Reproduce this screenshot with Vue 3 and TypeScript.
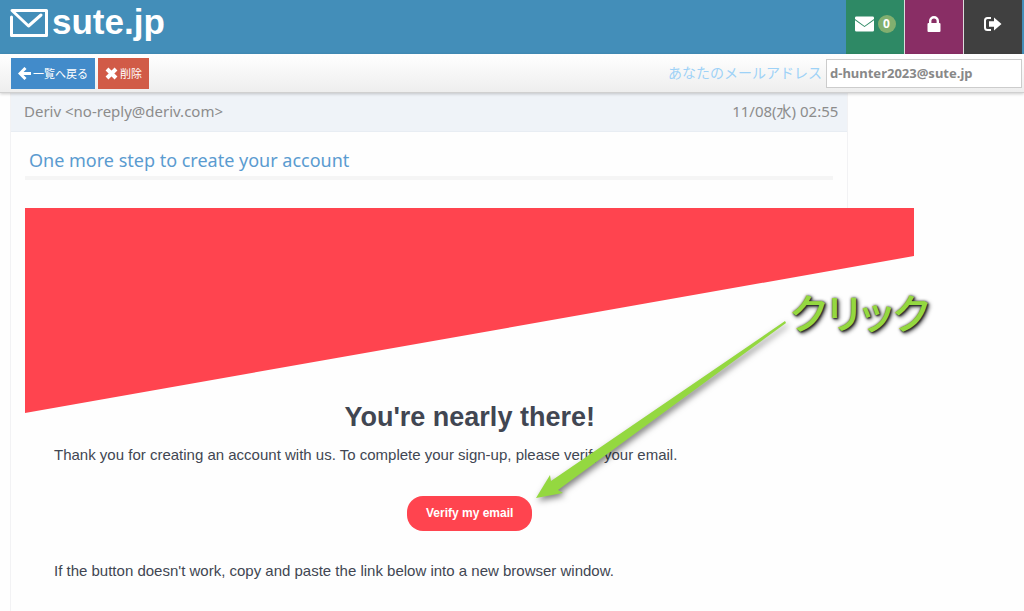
<script setup lang="ts">
import { ref } from 'vue'

const unread = ref(0)
const address = ref('d-hunter2023@sute.jp')
const mail = {
  from: 'Deriv <no-reply@deriv.com>',
  date: '11/08(水) 02:55',
  subject: 'One more step to create your account',
}
</script>

<template>
  <div class="page">
    <header class="navbar">
      <a class="brand" href="#">
        <svg class="brand-icon" viewBox="0 0 38 28" aria-hidden="true">
          <path d="M1.5 8V26.5H36.500V1.500H2L18.500 17L31 6" />
        </svg>
        <span>sute.jp</span>
      </a>
      <nav class="tiles">
        <a class="tile inbox" href="#" aria-label="受信箱">
          <svg class="envelope" viewBox="0 0 20 16" aria-hidden="true">
            <path d="M0 1.500Q0 0 1.500 0H18.500Q20 0 20 1.500V2.700L10 10L0 2.700ZM0 4L10 11.200L20 4V14.500Q20 16 18.500 16H1.500Q0 16 0 14.500Z" />
          </svg>
          <span class="badge">{{ unread }}</span>
        </a>
        <a class="tile lock" href="#" aria-label="ロック">
          <svg viewBox="0 0 14 16" class="padlock" aria-hidden="true">
            <path fill-rule="evenodd" d="M2 7V5A5 5 0 0 1 12 5V7H12.500Q13.500 7 13.500 8V15Q13.500 16 12.500 16H1.500Q0.500 16 0.500 15V8Q0.500 7 1.500 7ZM4.400 7H9.600V5A2.600 2.600 0 0 0 4.400 5Z" />
          </svg>
        </a>
        <a class="tile exit" href="#" aria-label="ログアウト">
          <svg viewBox="0 0 18 14" class="signout" aria-hidden="true">
            <path class="frame" d="M7 1H3.500Q1 1 1 3.500V10.500Q1 13 3.500 13H7" />
            <path d="M10 0.500L17.500 7L10 13.500V9.800H5V4.200H10Z" />
          </svg>
        </a>
      </nav>
    </header>

    <div class="toolbar">
      <div class="actions">
        <button type="button" class="btn back">
          <svg viewBox="0 0 13 13" aria-hidden="true">
            <path d="M7.500 1L2 6.500L7.500 12M2.500 6.500H13" />
          </svg>
          <span>一覧へ戻る</span>
        </button>
        <button type="button" class="btn remove">
          <svg viewBox="0 0 13 13" class="cross" aria-hidden="true">
            <path d="M2 2L11 11M11 2L2 11" />
          </svg>
          <span>削除</span>
        </button>
      </div>
      <div class="address">
        <label for="address">あなたのメールアドレス</label>
        <input id="address" v-model="address" type="text" readonly />
      </div>
    </div>

    <main class="card">
      <div class="card-head">
        <span>{{ mail.from }}</span>
        <span>{{ mail.date }}</span>
      </div>
      <div class="card-body">
        <h1 class="subject">{{ mail.subject }}</h1>
        <article class="email">
          <svg class="banner" viewBox="0 0 889 205" preserveAspectRatio="none" aria-hidden="true">
            <polygon points="0,0 889,0 889,48 0,205" />
          </svg>
          <h2>You're nearly there!</h2>
          <p>Thank you for creating an account with us. To complete your sign-up, please verify your email.</p>
          <a class="verify" href="#">Verify my email</a>
          <p>If the button doesn't work, copy and paste the link below into a new browser window.</p>
        </article>
      </div>
    </main>

    <svg class="arrow" viewBox="0 0 260 190" aria-hidden="true">
      <polygon points="6,178 20,155 21,161 255,1 256,3 28,170 33,173" />
    </svg>
    <span class="callout">クリック</span>
  </div>
</template>

<style>
body {
  margin: 0;
  background: #fefefe;
}
</style>

<style scoped>
.page {
  position: relative;
  display: flex;
  flex-direction: column;
  height: 100vh;
  overflow: hidden;
  font-family: "Noto Sans", "Noto Sans CJK JP", sans-serif;
}
.page * {
  box-sizing: border-box;
}
a {
  text-decoration: none;
}
.navbar {
  display: flex;
  flex: none;
  justify-content: space-between;
  height: 54px;
  padding-right: 2px;
  background: #438eb9;
}
.brand {
  display: flex;
  gap: 4px;
  padding: 2px 0 0 10px;
  color: #fff;
  font: bold 35px/40px "Liberation Sans", Arial, sans-serif;
}
.brand-icon {
  width: 38px;
  height: 28px;
  margin-top: 7px;
  fill: none;
  stroke: #fff;
  stroke-width: 3;
  stroke-linejoin: round;
  stroke-linecap: round;
}
.tiles {
  display: flex;
  gap: 1px;
  background: #ddd;
}
.tile {
  display: flex;
  align-items: center;
  justify-content: center;
  gap: 4px;
  width: 58px;
  padding-bottom: 6px;
  color: #fff;
  fill: #fff;
}
.inbox {
  background: #2e8965;
}
.lock {
  background: #892e65;
}
.exit {
  background: #404040;
}
.envelope {
  width: 19px;
  height: 16px;
}
.padlock {
  width: 14px;
  height: 16px;
}
.signout {
  width: 18px;
  height: 14px;
}
.frame {
  fill: none;
  stroke: #fff;
  stroke-width: 2;
}
.badge {
  width: 18px;
  border-radius: 9px;
  background: #82af6f;
  font: bold 12px/18px "Open Sans", sans-serif;
  text-align: center;
}
.toolbar {
  position: relative;
  z-index: 1;
  display: flex;
  flex: none;
  align-items: center;
  justify-content: space-between;
  height: 39px;
  padding: 0 2px 0 11px;
  border-bottom: 1px solid #d0d0d0;
  background: linear-gradient(#fff, #eee);
  box-shadow: 0 1px 3px rgba(0, 0, 0, 0.2);
}
.actions {
  display: flex;
  gap: 3px;
}
.btn {
  display: flex;
  align-items: center;
  gap: 2px;
  height: 31px;
  padding: 0 6px;
  border: 1px solid;
  color: #fff;
  font: 11px/16px "Noto Sans CJK JP", sans-serif;
}
.btn svg {
  width: 13px;
  height: 13px;
  fill: none;
  stroke: #fff;
  stroke-width: 3;
}
.btn .cross {
  stroke-width: 4;
}
.back {
  border-color: #428bca;
  background: #428bca;
}
.remove {
  border-color: #d15b47;
  background: #d15b47;
}
.address {
  display: flex;
  align-items: center;
  gap: 4px;
}
.address label {
  padding-bottom: 3px;
  color: #9ed2f7;
  font: 14px/20px "Noto Sans CJK JP", sans-serif;
}
.address input {
  width: 196px;
  height: 29px;
  padding: 0 3px;
  border: 1px solid #ccc;
  background: #fff;
  color: #888;
  font: bold 13px/20px "Noto Sans", sans-serif;
}
.card {
  flex: 1 0 auto;
  width: calc(83.333% - 15px);
  margin-left: 10px;
  border: solid #f2f2f4;
  border-width: 0 1px;
}
.card-head {
  display: flex;
  justify-content: space-between;
  padding: 8px 9px 10px 13px;
  border-bottom: 1px solid #e8edf3;
  background: #eff3f8;
  color: #8c8c8c;
  font-size: 15px;
  line-height: 20px;
}
.card-body {
  padding: 14px;
}
.subject {
  margin: 0 0 28px;
  padding: 2px 4px 4px;
  border-bottom: 4px solid #f5f5f5;
  color: #5a9bd0;
  font-size: 18px;
  font-weight: normal;
  line-height: 24px;
}
.email {
  display: flex;
  flex-direction: column;
  margin-right: -81px;
  padding-bottom: 40px;
  background: #fefefe;
  color: #414652;
  font: 15px/24px "Liberation Sans", Arial, sans-serif;
}
.banner {
  display: block;
  width: 100%;
  height: 205px;
  fill: #ff444f;
}
.email h2 {
  margin: -12px 0 10px;
  font-size: 27px;
  line-height: 32px;
  text-align: center;
}
.email p {
  margin: 0 29px;
}
.verify {
  align-self: center;
  margin: 29px 0 28px;
  padding: 0 19px;
  border-radius: 16px;
  background: #ff444f;
  color: #fff;
  font-size: 12px;
  font-weight: bold;
  line-height: 35px;
}
.arrow {
  position: absolute;
  z-index: 2;
  top: 320px;
  left: 530px;
  width: 260px;
  height: 190px;
  fill: #94d840;
  filter: drop-shadow(2px 3px 3px rgba(0, 0, 0, 0.5));
  pointer-events: none;
}
.callout {
  position: absolute;
  z-index: 2;
  top: 281px;
  left: 790px;
  color: #94d840;
  font: 500 41px/60px "Noto Sans CJK JP", sans-serif;
  font-feature-settings: "palt";
  white-space: nowrap;
  text-shadow: 1px 1px 2px #222, 2px 2px 4px #444, 0 0 3px #555;
}
</style>
